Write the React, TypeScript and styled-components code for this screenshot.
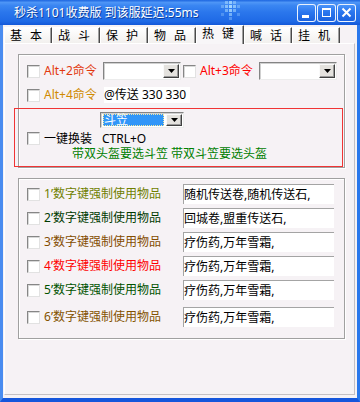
import React from "react";
import styled, { createGlobalStyle } from "styled-components";

const GlobalStyle = createGlobalStyle`
  html, body { margin: 0; padding: 0; }
  body {
    width: 360px; height: 402px; overflow: hidden;
    font-family: "Noto Sans", "Noto Sans CJK SC", sans-serif;
    font-size: 12px;
  }
  * { box-sizing: border-box; }
`;

const Window = styled.div`
  width: 360px;
  height: 402px;
  display: flex;
  flex-direction: column;
  background: #0a5ad8;
`;

const TitleBar = styled.div`
  height: 25px;
  flex: none;
  display: flex;
  align-items: center;
  padding: 0 4px 0 14px;
  background: linear-gradient(
    to bottom,
    #1d66e0 0%,
    #4d95f6 10%,
    #3a86f2 22%,
    #2a76ec 50%,
    #1f6ae6 85%,
    #1358d8 100%
  );
  color: #fff;
`;

const TitleText = styled.div`
  flex: 0 0 206px;
  font-size: 12px;
  line-height: 14px;
  white-space: nowrap;
  text-shadow: 1px 1px 0 #0b3d9c;
`;

const Logo = styled.svg`
  flex: none;
  align-self: flex-start;
`;

const Spacer = styled.div`
  flex: 1;
`;

const CtlGroup = styled.div`
  display: flex;
  gap: 1px;
`;

const CtlButton = styled.div`
  width: 19px;
  height: 18px;
  border: 1px solid rgba(255, 255, 255, 0.9);
  border-radius: 3px;
  background: linear-gradient(to bottom, #4a94fa 0%, #2a76ee 45%, #1a62e0 100%);
  display: flex;
  align-items: center;
  justify-content: center;
`;

const Body = styled.div`
  flex: 1;
  display: flex;
  flex-direction: column;
  border-left: 3px solid #4a8cf0;
  border-right: 3px solid #2a78ec;
  border-bottom: 4px solid #1556dc;
  background: #f6f2f5;
`;

const TabStrip = styled.div`
  height: 18px;
  flex: none;
  display: flex;
  align-items: flex-end;
  padding-left: 1px;
  position: relative;
  z-index: 1;
`;

const Tab = styled.div<{ $active?: boolean }>`
  width: 48px;
  height: ${(p) => (p.$active ? 19 : 16)}px;
  margin-bottom: ${(p) => (p.$active ? -1 : 0)}px;
  flex: none;
  display: flex;
  align-items: ${(p) => (p.$active ? "flex-start" : "center")};
  padding: ${(p) => (p.$active ? "1px 0 0 5px" : "0 0 0 5px")};
  background: ${(p) =>
    p.$active ? "#f8f6f8" : "linear-gradient(to bottom, #ffffff, #f2f0ee)"};
  border-top: 1px solid #ffffff;
  border-left: 1px solid #ffffff;
  border-right: 1px solid #4a4a4a;
  box-shadow: inset -1px 0 0 #a0a0a0;
  font-size: 12px;
  line-height: 14px;
  color: #000;
  word-spacing: 5px;
  white-space: nowrap;
`;

const Panel = styled.div`
  flex: 1;
  margin: 0 2px 3px 1px;
  border: 1px solid;
  border-color: #ffffff #c4c0c4 #c4c0c4 #ffffff;
  padding: 10px 9px 0 13px;
  display: flex;
  flex-direction: column;
  gap: 10px;
`;

const Group = styled.div<{ $pt: number; $pb: number; $gap: number }>`
  border: 1px solid #a0a0a0;
  box-shadow: inset 1px 1px 0 #ffffff, 1px 1px 0 #ffffff;
  padding: ${(p) => p.$pt}px 0 ${(p) => p.$pb}px 0;
  display: flex;
  flex-direction: column;
  gap: ${(p) => p.$gap}px;
`;

const Row = styled.div<{ $h: number; $pl: number; $mt?: number }>`
  height: ${(p) => p.$h}px;
  margin-top: ${(p) => p.$mt ?? 0}px;
  padding-left: ${(p) => p.$pl}px;
  display: flex;
  align-items: center;
  flex: none;
`;

const Check = styled.span<{ $ml?: number }>`
  width: 13px;
  height: 13px;
  flex: none;
  background: #ffffff;
  border: 1px solid;
  border-color: #868686 #e2e2e2 #e2e2e2 #868686;
  box-shadow: inset 1px 1px 0 #d8d8d8;
  margin-left: ${(p) => p.$ml ?? 0}px;
  margin-right: 4px;
`;

const Label = styled.span<{ $color?: string; $w?: number }>`
  flex: none;
  width: ${(p) => (p.$w ? `${p.$w}px` : "auto")};
  color: ${(p) => p.$color ?? "#000"};
  font-size: 12px;
  line-height: 14px;
  white-space: nowrap;
`;

const Combo = styled.div<{ $w: number; $h: number; $ml?: number }>`
  width: ${(p) => p.$w}px;
  height: ${(p) => p.$h}px;
  margin-left: ${(p) => p.$ml ?? 0}px;
  flex: none;
  display: flex;
  align-items: stretch;
  background: #ffffff;
  border: 1px solid;
  border-color: #848484 #ececec #ececec #848484;
  box-shadow: inset 1px 1px 0 #d0d0d0;
  padding: 1px;
`;

const ComboText = styled.div<{ $selected?: boolean }>`
  flex: 1;
  margin: ${(p) => (p.$selected ? "0 2px 0 1px" : "0")};
  background: ${(p) => (p.$selected ? "#3196f8" : "transparent")};
  outline: ${(p) => (p.$selected ? "1px dotted #f4e8a0" : "none")};
  outline-offset: -1px;
  color: ${(p) => (p.$selected ? "#ffffff" : "#000")};
  font-size: 12px;
  display: flex;
  align-items: center;
  line-height: 12px;
  padding-left: 1px;
  white-space: nowrap;
  overflow: visible;
`;

const DropBtn = styled.div`
  width: 16px;
  flex: none;
  background: #e4e2de;
  border: 1px solid;
  border-color: #fafafa #404040 #404040 #fafafa;
  box-shadow: inset -1px -1px 0 #9a9a9a;
  display: flex;
  align-items: center;
  justify-content: center;
`;

const TextBox = styled.div<{ $w: number; $h: number; $framed?: boolean }>`
  width: ${(p) => p.$w}px;
  height: ${(p) => p.$h}px;
  flex: none;
  display: flex;
  align-items: center;
  background: #ffffff;
  border-top: ${(p) => (p.$framed ? "1px solid #a4a4a4" : "none")};
  border-left: ${(p) => (p.$framed ? "1px solid #a4a4a4" : "none")};
  color: #000;
  font-size: 12px;
  line-height: 14px;
  white-space: nowrap;
  overflow: visible;
`;

const RedBox = styled.div`
  margin: 4px 1px 0 -5px;
  border: 1px solid #f03434;
  padding: 3px 0 5px 0;
  display: flex;
  flex-direction: column;
`;

const Hint = styled.div`
  height: 15px;
  padding-left: 57px;
  color: #008000;
  font-size: 12px;
  line-height: 15px;
  white-space: nowrap;
`;

const Arrow = () => (
  <svg width="7" height="4" viewBox="0 0 7 4">
    <path d="M0 0H7L3.5 4Z" fill="#000" />
  </svg>
);

const LogoMark = () => {
  const cells: [number, number, number][] = [
    [1, 0, 0.55], [2, 0, 0.8], [3, 0, 0.5],
    [0, 1, 0.4], [1, 1, 0.7], [2, 1, 0.95], [3, 1, 0.7], [4, 1, 0.4],
    [1, 2, 0.55], [2, 2, 0.8], [3, 2, 0.55],
    [0, 3, 0.3], [2, 3, 0.6], [4, 3, 0.3],
    [2, 4, 0.35],
  ];
  return (
    <Logo width="22" height="21" viewBox="0 0 22 21">
      {cells.map(([c, r, o], i) => (
        <rect key={i} x={1 + c * 4} y={1 + r * 4} width="3" height="3" fill="#a8d8ff" opacity={o} />
      ))}
    </Logo>
  );
};

const items = [
  { n: "1", color: "#6f7f00", text: "随机传送卷,随机传送石," },
  { n: "2", color: "#003a00", text: "回城卷,盟重传送石," },
  { n: "3", color: "#844c00", text: "疗伤药,万年雪霜," },
  { n: "4", color: "#ff0000", text: "疗伤药,万年雪霜," },
  { n: "5", color: "#005200", text: "疗伤药,万年雪霜," },
  { n: "6", color: "#845200", text: "疗伤药,万年雪霜," },
];

const tabs = ["基 本", "战 斗", "保 护", "物 品", "热 键", "喊 话", "挂 机"];

export default function App() {
  return (
    <>
      <GlobalStyle />
      <Window>
        <TitleBar>
          <TitleText>秒杀1101收费版 到该服延迟:55ms</TitleText>
          <LogoMark />
          <Spacer />
          <CtlGroup>
            <CtlButton>
              <svg width="17" height="16" viewBox="0 0 17 16">
                <rect x="4" y="10" width="7" height="3" fill="#fff" />
              </svg>
            </CtlButton>
            <CtlButton>
              <svg width="17" height="16" viewBox="0 0 17 16">
                <rect x="4.5" y="3.5" width="8" height="8" fill="none" stroke="#fff" strokeWidth="1" />
                <rect x="4" y="3" width="9" height="2" fill="#fff" />
              </svg>
            </CtlButton>
            <CtlButton>
              <svg width="17" height="16" viewBox="0 0 17 16">
                <path d="M4.5 3.5L12.5 11.5M12.5 3.5L4.5 11.5" stroke="#fff" strokeWidth="2" />
              </svg>
            </CtlButton>
          </CtlGroup>
        </TitleBar>
        <Body>
          <TabStrip>
            {tabs.map((t) => (
              <Tab key={t} $active={t === "热 键"}>
                {t}
              </Tab>
            ))}
          </TabStrip>
          <Panel>
            <Group $pt={7} $pb={0} $gap={0}>
              <Row $h={18} $pl={8}>
                <Check />
                <Label $color="#e2380e" $w={59}>Alt+2命令</Label>
                <Combo $w={78} $h={18}>
                  <ComboText />
                  <DropBtn><Arrow /></DropBtn>
                </Combo>
                <Check $ml={2} />
                <Label $color="#ff0000" $w={59}>Alt+3命令</Label>
                <Combo $w={78} $h={18}>
                  <ComboText />
                  <DropBtn><Arrow /></DropBtn>
                </Combo>
              </Row>
              <Row $h={18} $pl={8} $mt={6}>
                <Check />
                <Label $color="#d08a00" $w={60}>Alt+4命令</Label>
                <TextBox $w={86} $h={16}>@传送 330 330</TextBox>
              </Row>
              <RedBox>
                <Combo $w={84} $h={16} $ml={85}>
                  <ComboText $selected>斗笠</ComboText>
                  <DropBtn><Arrow /></DropBtn>
                </Combo>
                <Row $h={15} $pl={12} $mt={3}>
                  <Check />
                  <Label $w={58}>一键换装</Label>
                  <Label>CTRL+O</Label>
                </Row>
                <Hint>带双头盔要选斗笠 带双斗笠要选头盔</Hint>
              </RedBox>
            </Group>
            <Group $pt={5} $pb={11} $gap={4}>
              {items.map((it, i) => (
                <Row key={it.n} $h={20} $pl={8} $mt={i === 5 ? 3 : 0}>
                  <Check />
                  <Label $color={it.color} $w={139}>{it.n}’数字键强制使用物品</Label>
                  <TextBox $w={151} $h={20} $framed>{it.text}</TextBox>
                </Row>
              ))}
            </Group>
          </Panel>
        </Body>
      </Window>
    </>
  );
}
